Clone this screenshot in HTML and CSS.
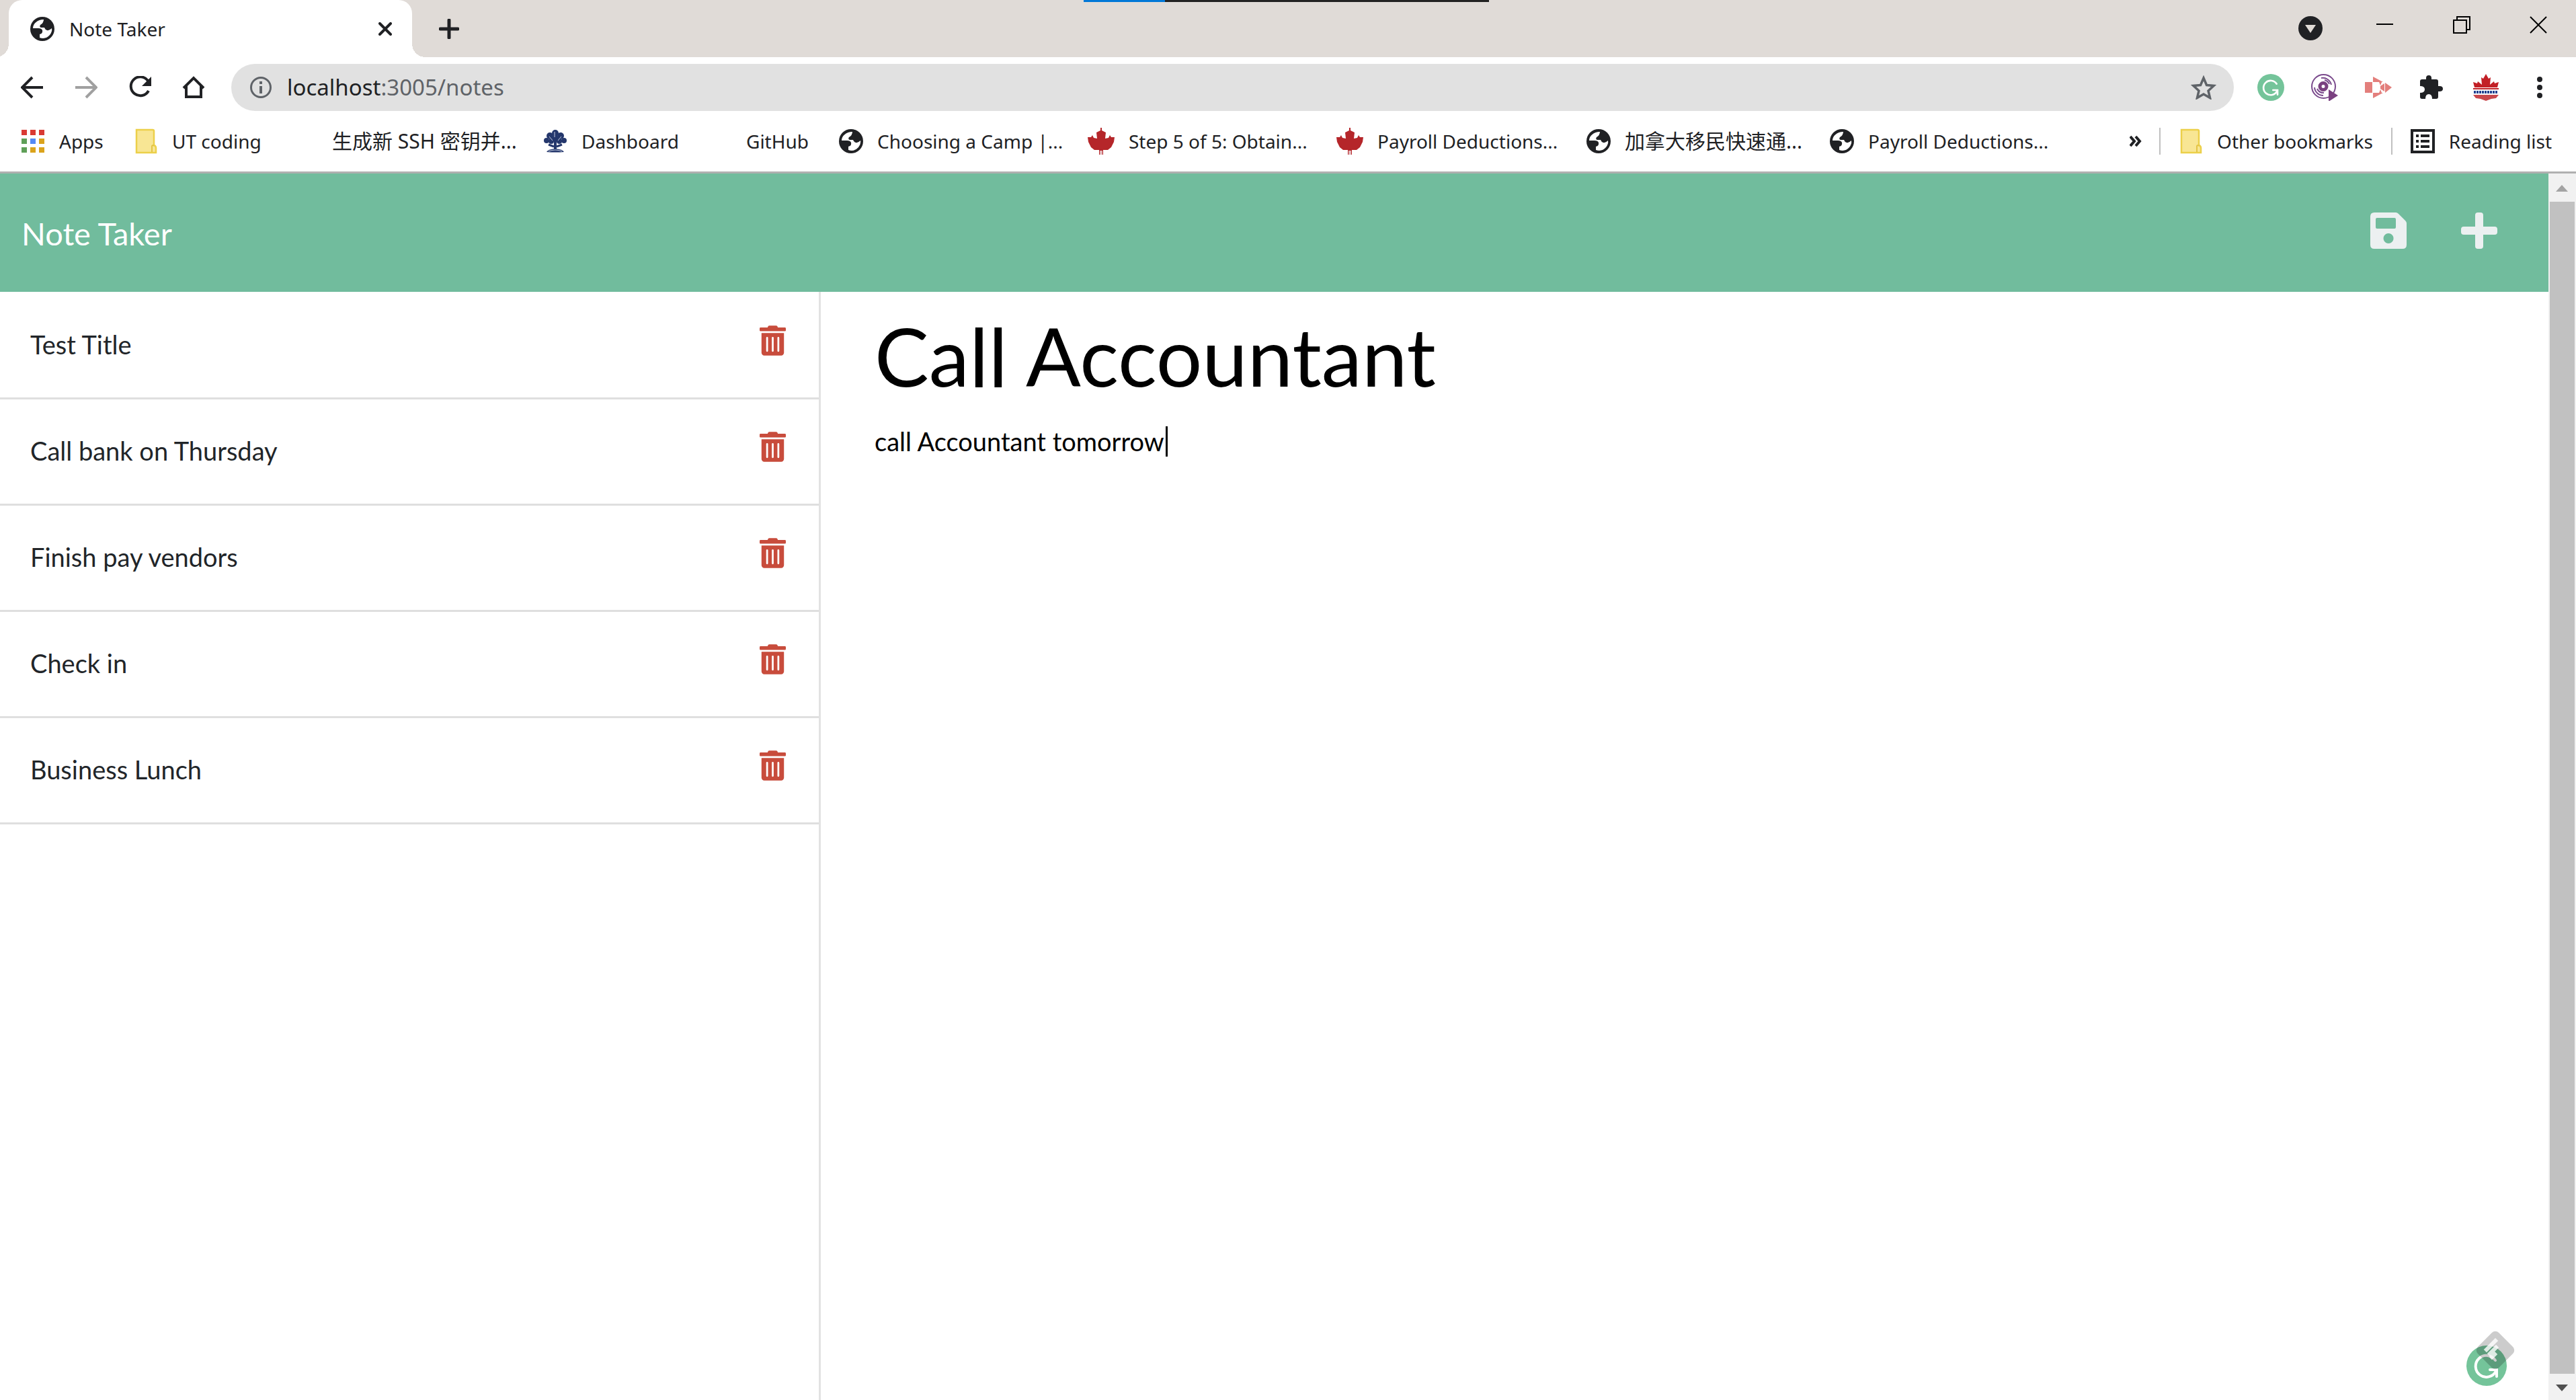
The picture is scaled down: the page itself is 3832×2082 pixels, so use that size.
FILE: index.html
```html
<!DOCTYPE html>
<html lang="en">
<head>
<meta charset="utf-8">
<title>Note Taker</title>
<link rel="stylesheet" href="styles.css">
</head>
<body>
<svg class="symbols" aria-hidden="true">
  <symbol id="globe" viewBox="0 0 36 36">
    <circle cx="18" cy="18" r="18" fill="#202124"/>
    <path d="M20 4C11 4 4 10 4 17h8q5 0 6 3 1 5-4 6v5q9 3 15-4 4-5 3-10-4 4-7 3-3-1-4-4h-5q-3-1-1-4 5-3 5-8z" fill="#fff"/>
  </symbol>
  <symbol id="folder" viewBox="0 0 32 38">
    <path d="M2 2h24q2 0 2 2v21q3 1 3 4v7H2z" fill="#f8e694" stroke="#ecd04a" stroke-width="2.500"/>
    <path d="M25 35v-9q1-2 3 0" fill="none" stroke="#e3c445" stroke-width="2"/>
  </symbol>
  <symbol id="maple" viewBox="0 0 40 40">
    <path d="M19 0h2v4l6 3-1 9 5-1 2-4 2 3 5 0-1 7-4 8-5 4H23v7h-6v-7H10l-5-4-4-8-1-7 5 0 2-3 2 4 5 1-1-9 6-3z" fill="#b5262a"/>
    <path d="M18 34h4v6h-4z" fill="#e3b7b9"/>
  </symbol>
  <symbol id="trash" viewBox="0 0 448 512">
    <path fill-rule="evenodd" d="M432 32H312l-9-19A24 24 0 0 0 281 0H167a24 24 0 0 0-22 13l-9 19H16A16 16 0 0 0 0 48v32a16 16 0 0 0 16 16h416a16 16 0 0 0 16-16V48a16 16 0 0 0-16-16zM32 128v336a48 48 0 0 0 48 48h288a48 48 0 0 0 48-48V128zm80 304V208a16 16 0 0 1 32 0v224a16 16 0 0 1-32 0zm96 0V208a16 16 0 0 1 32 0v224a16 16 0 0 1-32 0zm96 0V208a16 16 0 0 1 32 0v224a16 16 0 0 1-32 0z" fill="#c84c3c"/>
  </symbol>
  <symbol id="gram" viewBox="0 0 60 60">
    <circle cx="30" cy="30" r="30" fill="#74c49a"/>
    <path d="M43 22A16 16 0 1 0 44 38M35 36h10v10" fill="none" stroke="#fff" stroke-width="4" stroke-linecap="round"/>
  </symbol>
</svg>

<header class="browser">
  <div class="tabstrip">
    <div class="tab">
      <svg class="fav"><use href="#globe"/></svg>
      <span class="tab-title">Note Taker</span>
      <button class="plain" aria-label="Close tab"><svg width="20" height="20" viewBox="0 0 20 20"><path d="M2 2l16 16M18 2L2 18" stroke="#202124" stroke-width="4" stroke-linecap="round"/></svg></button>
    </div>
    <button class="plain new-tab" aria-label="New tab"><svg width="30" height="30" viewBox="0 0 30 30"><path d="M15 2v26M2 15h26" stroke="#202124" stroke-width="5" stroke-linecap="round"/></svg></button>
    <div class="window-buttons">
      <button class="plain" aria-label="Search tabs"><svg width="36" height="36" viewBox="0 0 36 36"><circle cx="18" cy="18" r="18" fill="#202124"/><path d="M10 13h16l-8 12z" fill="#e0dbd7"/></svg></button>
      <button class="plain" aria-label="Minimize"><svg width="26" height="26" viewBox="0 0 26 26"><path d="M0 12h25" stroke="#000" stroke-width="2"/></svg></button>
      <button class="plain" aria-label="Restore"><svg width="26" height="26" viewBox="0 0 26 26"><path d="M1 6h19v19H1zM6 6V1h19v19h-5" fill="none" stroke="#000" stroke-width="2"/></svg></button>
      <button class="plain" aria-label="Close window"><svg width="26" height="26" viewBox="0 0 26 26"><path d="M1 1l24 24M25 1L1 25" stroke="#000" stroke-width="2"/></svg></button>
    </div>
    <div class="progress"><span></span></div>
  </div>

  <div class="toolbar">
    <div class="nav">
      <button class="plain" aria-label="Back"><svg width="34" height="34" viewBox="0 0 34 34"><path d="M33 17H3M17 2L2 17l15 15" fill="none" stroke="#202124" stroke-width="4"/></svg></button>
      <button class="plain" aria-label="Forward"><svg width="34" height="34" viewBox="0 0 34 34"><path d="M1 17h30M17 2l15 15-15 15" fill="none" stroke="#a0a0a0" stroke-width="4"/></svg></button>
      <button class="plain" aria-label="Reload"><svg width="34" height="34" viewBox="0 0 34 34"><path d="M29 7A14 14 0 1 0 30 22" fill="none" stroke="#202124" stroke-width="4"/><path d="M34 1v14H20z" fill="#202124"/></svg></button>
      <button class="plain" aria-label="Home"><svg width="34" height="34" viewBox="0 0 34 34"><path d="M2 18L17 3l15 15M6 15v16h22V15" fill="none" stroke="#202124" stroke-width="4"/></svg></button>
    </div>
    <div class="address">
      <svg width="32" height="32" viewBox="0 0 32 32"><circle cx="16" cy="16" r="14.500" fill="none" stroke="#5f6368" stroke-width="3"/><path d="M16 7v4M16 14v11" stroke="#5f6368" stroke-width="4"/></svg>
      <a class="url" href="http://localhost:3005/notes">localhost<span>:3005/notes</span></a>
      <button class="plain" aria-label="Bookmark this page"><svg width="38" height="36" viewBox="0 0 38 36"><path d="M19 4l4.500 10.500L34 15.500l-8 7.500 2.500 10.500L19 28l-9.500 5.500L12 23l-8-7.500 10.500-1z" fill="none" stroke="#5f6368" stroke-width="3.500"/></svg></button>
    </div>
    <div class="extensions">
      <button class="plain" aria-label="Writing assistant"><svg width="40" height="40"><use href="#gram"/></svg></button>
      <button class="plain" aria-label="Recorder"><svg width="40" height="40" viewBox="0 0 40 40"><circle cx="18.500" cy="18.500" r="17.500" fill="none" stroke="#7a4a8c" stroke-width="2"/><circle cx="18" cy="18.500" r="5" fill="none" stroke="#7a4080" stroke-width="5"/><path d="M15 6a13 13 0 0 1 15 10M20 9a10 10 0 0 1 7 6M5 20a13 13 0 0 0 13 12M9 22a10 10 0 0 0 10 6" fill="none" stroke="#7a4a8c" stroke-width="2"/><path d="M26 23l14 9-14 9z" fill="#7a4080"/></svg></button>
      <button class="plain" aria-label="Screen capture"><svg width="40" height="40" viewBox="0 0 40 40"><path d="M0 12h11v16H0zM12 4l15 8-2 0-2 5-2-5H12zM12 28h9l2-5 2 5h2l-15 8zM30 13l10 7-10 8zM23 18l6-4v12l-6-4z" fill="#e37f7c"/></svg></button>
      <button class="plain" aria-label="Extensions"><svg width="40" height="40" viewBox="0 0 40 40"><path d="M2 11q0-3 3-3h6V6q0-4 4-4t4 4v2h7q3 0 3 3v7h2q5 0 5 4t-5 4h-2v8q0 3-3 3h-6q0-7-5-7t-5 7H5q-3 0-3-3v-6q7 0 7-5t-7-5z" fill="#202124"/></svg></button>
      <button class="plain" aria-label="Profile"><svg width="40" height="40" viewBox="0 0 40 40"><path d="M20 0l4 7 3-2-1 11 6-5 1 3 6-2-2 8H3L1 12l6 2 1-3 6 5-1-11 3 2zM1 21h38v2H1z" fill="#c22026"/><path d="M2 27h36" stroke="#1f3f8f" stroke-width="4" stroke-dasharray="3 1"/><path d="M1 31h38l-4 5-7 1-8 3-8-3-7-1z" fill="#c8484c"/></svg></button>
      <button class="plain" aria-label="Menu"><svg width="40" height="40" viewBox="0 0 40 40"><g fill="#202124"><circle cx="20" cy="8" r="4"/><circle cx="20" cy="20" r="4"/><circle cx="20" cy="32" r="4"/></g></svg></button>
    </div>
  </div>

  <nav class="bookmarks">
    <div class="marks">
      <a href="#"><svg viewBox="0 0 36 36"><g fill="#d93a34"><path d="M1 1h8v8H1zM14 1h8v8h-8zM27 1h8v8h-8z"/></g><path d="M1 14h8v8H1zM1 27h8v8H1z" fill="#5f9f58"/><path d="M14 14h8v8h-8z" fill="#5489f5"/><path d="M27 14h8v8h-8zM14 27h8v8h-8zM27 27h8v8h-8z" fill="#dba31c"/></svg>Apps</a>
      <a href="#"><svg><use href="#folder"/></svg>UT coding</a>
      <a class="cjk" href="#"><i></i>生成新 SSH 密钥并...</a>
      <a href="#"><svg viewBox="0 0 36 36"><g fill="#24376c"><path d="M16 14h4v16h-4z"/><path d="M5 34q2-4 13-5 11 1 13 5-13 1-26 0z"/><circle cx="18" cy="6" r="5"/><circle cx="10" cy="10" r="5"/><circle cx="26" cy="10" r="5"/><circle cx="5" cy="17" r="4"/><circle cx="31" cy="17" r="4"/><circle cx="18" cy="14" r="5"/><circle cx="12" cy="18" r="4"/><circle cx="24" cy="18" r="4"/></g><path d="M8 23l8 3M28 23l-8 3" stroke="#24376c" stroke-width="3"/><path d="M17 4v8M9 11l5 6M27 11l-5 6M8 33q10-4 20 0" fill="none" stroke="#c3cbe0" stroke-width="1"/></svg>Dashboard</a>
      <a href="#"><i></i>GitHub</a>
      <a href="#"><svg><use href="#globe"/></svg>Choosing a Camp |...</a>
      <a class="leaf" href="#"><svg><use href="#maple"/></svg>Step 5 of 5: Obtain...</a>
      <a class="leaf" href="#"><svg><use href="#maple"/></svg>Payroll Deductions...</a>
      <a class="cjk" href="#"><svg><use href="#globe"/></svg>加拿大移民快速通...</a>
      <a href="#"><svg><use href="#globe"/></svg>Payroll Deductions...</a>
    </div>
    <button class="plain more" aria-label="More bookmarks"><svg width="18" height="18" viewBox="0 0 18 18"><path d="M1 2l6 7-6 7M9 2l6 7-6 7" fill="none" stroke="#202124" stroke-width="4"/></svg></button>
    <a class="side" href="#"><svg><use href="#folder"/></svg>Other bookmarks</a>
    <a class="side reading" href="#"><svg viewBox="0 0 36 36"><path d="M2 2h32v32H2z" fill="none" stroke="#202124" stroke-width="4"/><path d="M8 10h4M8 18h4M8 26h4M15 10h13M15 18h13M15 26h13" stroke="#202124" stroke-width="4"/></svg>Reading list</a>
  </nav>
</header>

<div class="viewport">
  <div class="app">
    <header class="navbar">
      <a class="brand" href="#">Note Taker</a>
      <div class="actions">
        <button class="plain" aria-label="Save note"><svg width="54" height="54" viewBox="0 0 54 54"><path fill-rule="evenodd" d="M6 0h32q2 0 4 2l10 10q2 2 2 4v32q0 6-6 6H6q-6 0-6-6V6q0-6 6-6zm4 8q-2 0-2 2v12q0 2 2 2h26q2 0 2-2V10q0-2-2-2zM27 31a7.500 7.500 0 1 0 .1 0z" fill="#ecf0f1"/></svg></button>
        <button class="plain" aria-label="New note"><svg width="54" height="54" viewBox="0 0 54 54"><path d="M25 0h4q4 0 4 4v17h17q4 0 4 4v4q0 4-4 4H33v17q0 4-4 4h-4q-4 0-4-4V33H4q-4 0-4-4v-4q0-4 4-4h17V4q0-4 4-4z" fill="#ecf0f1"/></svg></button>
      </div>
    </header>
    <main class="content">
      <ul class="notes">
        <li><span>Test Title</span><button class="plain" aria-label="Delete Test Title"><svg><use href="#trash"/></svg></button></li>
        <li><span>Call bank on Thursday</span><button class="plain" aria-label="Delete Call bank on Thursday"><svg><use href="#trash"/></svg></button></li>
        <li><span>Finish pay vendors</span><button class="plain" aria-label="Delete Finish pay vendors"><svg><use href="#trash"/></svg></button></li>
        <li><span>Check in</span><button class="plain" aria-label="Delete Check in"><svg><use href="#trash"/></svg></button></li>
        <li><span>Business Lunch</span><button class="plain" aria-label="Delete Business Lunch"><svg><use href="#trash"/></svg></button></li>
      </ul>
      <section class="editor">
        <input class="note-title" aria-label="Note title" value="Call Accountant">
        <textarea class="note-text" aria-label="Note text" spellcheck="false">call Accountant tomorrow</textarea>
        <span class="caret"></span>
      </section>
    </main>
    <svg class="helper" viewBox="0 0 74 84"><use href="#gram" y="23" width="60" height="60"/><g transform="rotate(45 43 30)"><rect x="21" y="8" width="44" height="44" rx="7" fill="#000" fill-opacity=".2"/></g><path d="M30 29l13-13M35 35l9-9M38 40l4-4" stroke="#fff" stroke-opacity=".8" stroke-width="6" stroke-linecap="square"/></svg>
  </div>
  <div class="scrollbar">
    <svg width="40" height="42" viewBox="0 0 40 42"><path d="M11 27l9-10 9 10z" fill="#a3a3a3"/></svg>
    <span class="thumb"></span>
    <svg width="40" height="39" viewBox="0 0 40 39"><path d="M11 16h18l-9 10z" fill="#505050"/></svg>
  </div>
</div>
</body>
</html>
```
FILE: styles.css
```css
* { box-sizing: border-box; }
body {
  margin: 0;
  min-height: 100vh;
  display: flex;
  flex-direction: column;
  background: #fff;
  color: #202124;
  font: 28px/40px "Noto Sans", "Noto Sans CJK SC", sans-serif;
}
a { color: inherit; text-decoration: none; }
svg { display: block; flex: none; }
.symbols { position: absolute; width: 0; height: 0; }
.plain { border: 0; padding: 0; background: none; display: block; }

/* Browser chrome */
.browser { border-bottom: 3px solid #b0b0b0; }
.tabstrip {
  position: relative;
  display: flex;
  height: 85px;
  padding-left: 13px;
  background: #e0dbd7;
}
.tab {
  position: relative;
  display: flex;
  align-items: center;
  width: 600px;
  padding: 0 30px 0 32px;
  border-radius: 20px 20px 0 0;
  background: #fff;
}
.tab::before, .tab::after {
  content: "";
  position: absolute;
  bottom: 0;
  width: 20px;
  height: 20px;
}
.tab::before { right: 100%; background: radial-gradient(circle at 0 0, #e0dbd7 20px, #fff 20px); }
.tab::after { left: 100%; background: radial-gradient(circle at 100% 0, #e0dbd7 20px, #fff 20px); }
.fav { width: 36px; height: 36px; }
.tab-title { flex: 1; margin-left: 22px; }
.new-tab { margin-left: 40px; }
.window-buttons {
  display: flex;
  gap: 88px;
  margin-left: auto;
  padding: 24px 43px 0 0;
  align-items: flex-start;
}
.window-buttons button:first-child { margin-right: -8px; }
.progress {
  position: absolute;
  left: 1612px;
  top: 0;
  width: 603px;
  height: 3px;
  background: #222;
}
.progress span { display: block; width: 20%; height: 100%; background: #0078d7; }

.toolbar { display: flex; align-items: center; height: 90px; padding: 0 34px 0 31px; }
.nav { display: flex; gap: 46px; width: 313px; }
.address {
  flex: 1;
  display: flex;
  align-items: center;
  height: 70px;
  padding: 0 26px 0 28px;
  border-radius: 35px;
  background: #e1e1e1;
}
.url { flex: 1; margin-left: 23px; font-size: 33px; }
.url span { color: #5f6368; }
.extensions { display: flex; gap: 40px; margin-left: 35px; }

.bookmarks { display: flex; align-items: center; height: 80px; padding: 0 36px 10px 31px; white-space: nowrap; }
.bookmarks a { display: flex; align-items: center; gap: 21px; }
.bookmarks a svg { width: 36px; height: 38px; }
.bookmarks .leaf svg { width: 40px; height: 40px; }
.bookmarks .cjk { font-size: 30px; }
.bookmarks i { width: 36px; }
.marks {
  flex: 1;
  display: grid;
  grid-template-columns: 168px 238px 371px 245px 195px 370px 370px 372px 362px 1fr;
}
.more { margin-right: 26px; }
.bookmarks .side { height: 40px; padding-left: 27px; border-left: 2px solid #c0c0c0; }
.bookmarks .reading { margin-left: 27px; }

/* Page */
.viewport { flex: 1; display: flex; font-family: Lato, sans-serif; }
.app { position: relative; flex: 1; display: flex; flex-direction: column; }
.navbar {
  display: flex;
  align-items: center;
  justify-content: space-between;
  height: 176px;
  padding: 0 76px 6px 32px;
  background: #71bc9d;
}
.brand { padding-top: 8px; color: #fff; font-size: 47px; line-height: 60px; }
.actions { display: flex; gap: 81px; }
.content { flex: 1; display: flex; }
.notes {
  width: 1221px;
  margin: 0;
  padding: 2px 0 0;
  border-right: 3px solid #e2e2e2;
  list-style: none;
}
.notes li {
  display: flex;
  justify-content: space-between;
  height: 158px;
  padding: 48px 49px 0 45px;
  border-bottom: 3px solid #dfdfdf;
  color: #212529;
  font-size: 38px;
  line-height: 56px;
}
.notes svg { width: 39px; height: 45px; }
.notes button { align-self: flex-start; }
.editor { position: relative; flex: 1; padding: 22px 80px 0; }
.note-title, .note-text {
  display: block;
  width: 100%;
  padding: 0;
  border: 0;
  outline: 0;
  background: none;
  color: #000;
  font-family: inherit;
}
.note-title { height: 144px; font-size: 121px; }
.note-text { height: 800px; margin-top: 26px; font-size: 38px; line-height: 60px; resize: none; }
.caret { position: absolute; left: 513px; top: 200px; width: 3px; height: 45px; background: #000; }
.helper { position: absolute; right: 48px; bottom: 20px; width: 74px; height: 84px; }

.scrollbar { display: flex; flex-direction: column; width: 41px; background: #f1f1f1; }
.thumb { flex: 1; margin: 0 2px; background: #c1c1c1; }
```
